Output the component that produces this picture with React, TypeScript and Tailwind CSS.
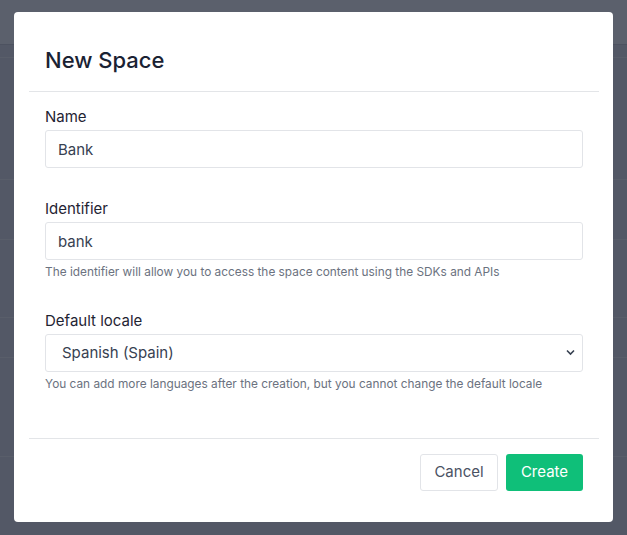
import React from "react";

const font = { fontFamily: "Inter, 'Noto Sans', sans-serif" };

function Field({
  label,
  children,
  help,
}: {
  label: string;
  children: React.ReactNode;
  help?: string;
}) {
  return (
    <div className="flex flex-col">
      <label className="text-[15px] leading-[20px] text-[#1f2433]">{label}</label>
      <div className="mt-[3px]">{children}</div>
      {help && (
        <p className="mt-[4px] text-[11.85px] leading-[16px] text-[#6b7280]">{help}</p>
      )}
    </div>
  );
}

export default function App() {
  return (
    <div className="relative h-[535px] w-[627px] overflow-hidden bg-[#535866]" style={font}>
      {/* dimmed page behind the modal */}
      <div className="h-[45px] border-b border-[#4d5260] bg-[#5b606c]" />
      <div className="h-[13px] border-b border-[#595e6a]" />
      <div className="h-[122px] border-b border-[#595e6a]" />
      <div className="h-[60px] border-b border-[#595e6a]" />
      <div className="h-[78px] border-b border-[#595e6a]" />
      <div className="h-[40px] border-b border-[#595e6a]" />
      <div className="h-[99px] border-b border-[#595e6a]" />

      {/* overlay */}
      <div className="absolute inset-0 pl-[14px] pt-[12px]">
        <div className="flex h-[510px] w-[599px] flex-col rounded-[4px] bg-white pl-[15px] pr-[14px]">
          <div className="flex h-[80px] items-center border-b border-[#e3e5e8] px-4">
            <h2 className="pt-[16px] text-[22px] font-medium leading-[28px] text-[#1a2233]">
              New Space
            </h2>
          </div>

          <div className="flex flex-col px-4 pt-[15px]">
            <Field label="Name">
              <input
                readOnly
                value="Bank"
                className="h-[38px] w-full rounded-[3px] border border-[#e2e4e8] px-[12px] text-[15px] text-[#374151] outline-none"
                style={font}
              />
            </Field>
            <div className="mt-[31px]">
              <Field
                label="Identifier"
                help="The identifier will allow you to access the space content using the SDKs and APIs"
              >
                <input
                  readOnly
                  value="bank"
                  className="h-[38px] w-full rounded-[3px] border border-[#e2e4e8] px-[12px] text-[15px] text-[#374151] outline-none"
                  style={font}
                />
              </Field>
            </div>
            <div className="mt-[31px]">
              <Field
                label="Default locale"
                help="You can add more languages after the creation, but you cannot change the default locale"
              >
                <div className="relative">
                  <select
                    defaultValue="es-ES"
                    className="h-[38px] w-full appearance-none rounded-[3px] border border-[#e2e4e8] bg-white pl-[16px] text-[15px] text-[#374151] outline-none"
                    style={font}
                  >
                    <option value="es-ES">Spanish (Spain)</option>
                  </select>
                  <svg
                    className="pointer-events-none absolute right-[8px] top-[15px]"
                    width="9"
                    height="7"
                    viewBox="0 0 9 7"
                    fill="none"
                  >
                    <path d="M1 1.5l3.5 3.5L8 1.5" stroke="#374151" strokeWidth="1.6" />
                  </svg>
                </div>
              </Field>
            </div>
          </div>

          <div className="mt-[46px] flex justify-end gap-[8px] border-t border-[#e3e5e8] px-4 pt-[15px]">
            <button
              className="h-[37px] w-[78px] rounded-[3px] border border-[#e2e4e8] bg-white text-[15px] text-[#4b5263]"
              style={font}
            >
              Cancel
            </button>
            <button
              className="h-[37px] w-[77px] rounded-[3px] bg-[#0fbf79] text-[15px] text-white"
              style={font}
            >
              Create
            </button>
          </div>
        </div>
      </div>
    </div>
  );
}
